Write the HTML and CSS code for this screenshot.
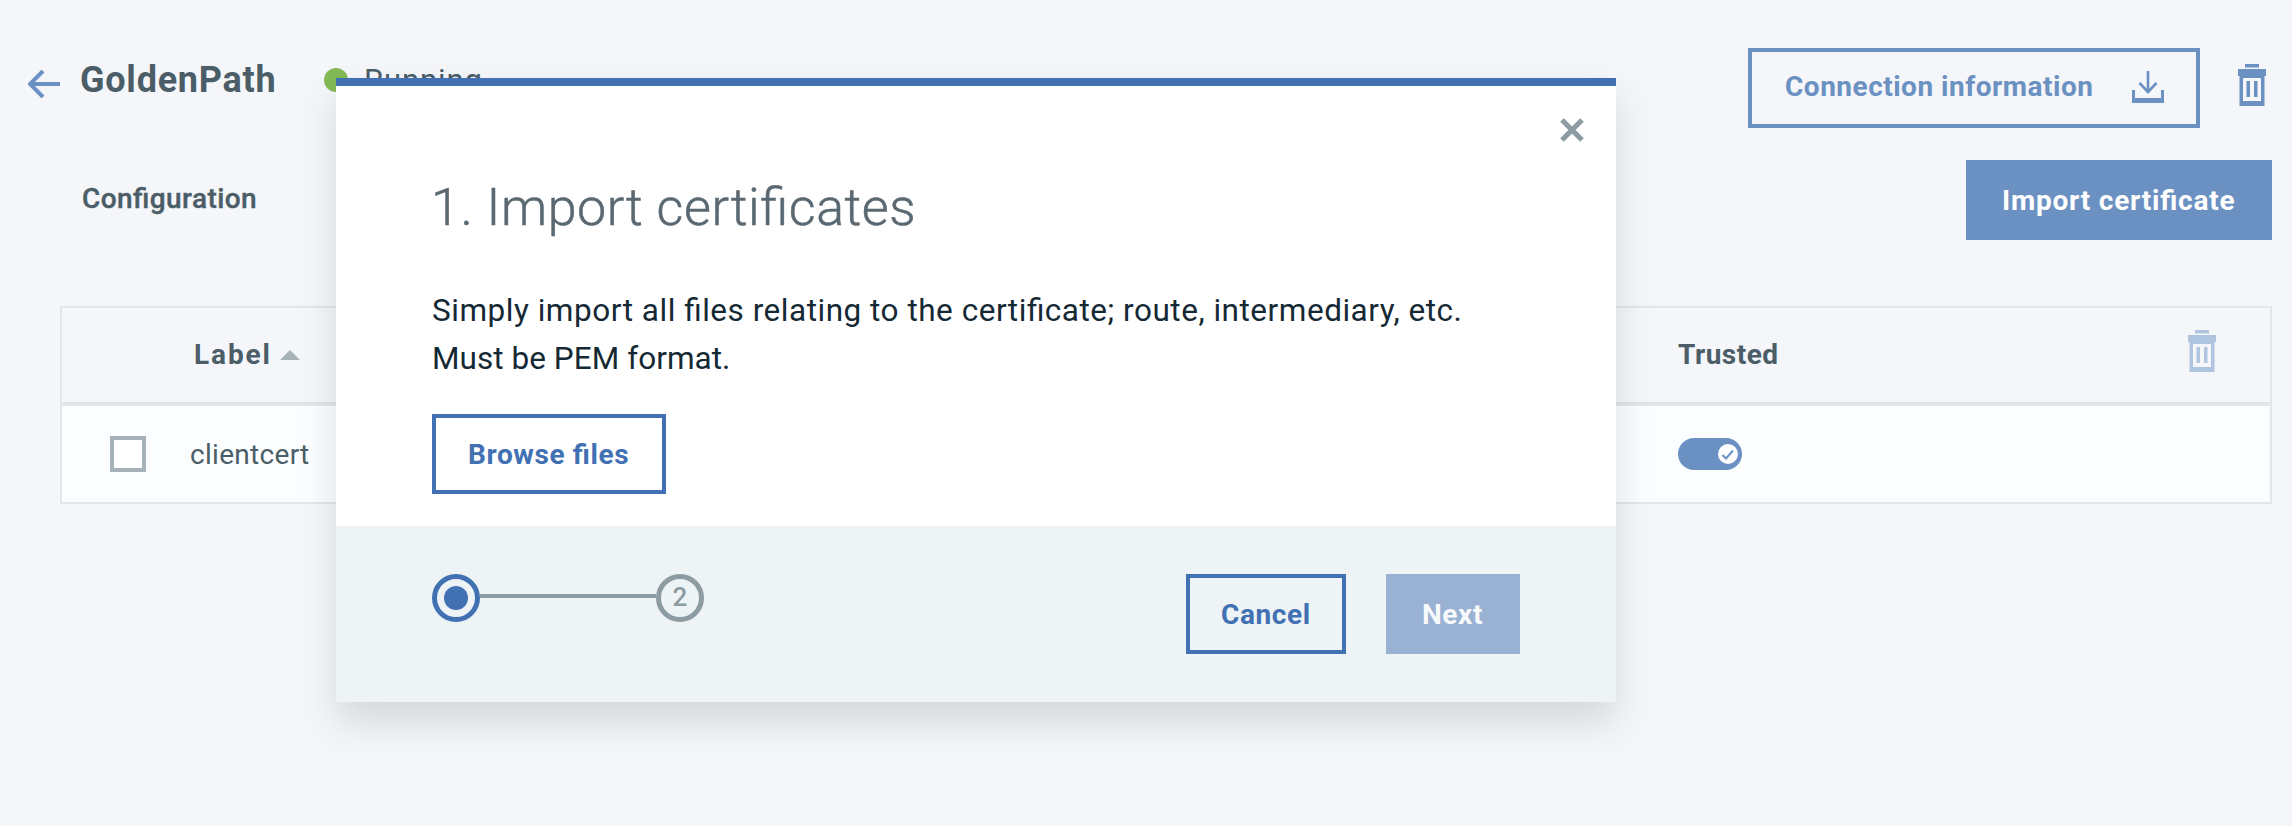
FILE: index.html
```html
<!DOCTYPE html>
<html lang="en">
<head>
<meta charset="utf-8">
<title>GoldenPath</title>
<link rel="stylesheet" href="styles.css">
</head>
<body>
<header class="topbar">
  <svg class="back" width="32" height="28" viewBox="0 0 32 28"><path d="M32 14H2M15 1 2 14l13 13" fill="none" stroke="currentColor" stroke-width="4"/></svg>
  <h1 class="name">GoldenPath</h1>
  <i class="dot"></i>
  <span class="status">Running</span>
  <button class="btn outline connection"><span>Connection information</span>
    <svg width="32" height="32" viewBox="0 0 32 32"><path d="M16 0v21M7.500 12l8.500 9 8.500-9" fill="none" stroke="currentColor" stroke-width="2.600"/><path d="M0 19h3v8h26v-8h3v13H0z" fill="currentColor"/></svg>
  </button>
  <svg class="trash" width="28" height="42" viewBox="0 0 28 42"><path fill="currentColor" fill-rule="evenodd" d="M7 0h14v3.500H7zM0 5h28v7h-1.500v30h-25V12H0zM5 14v23h18V14zM8.500 17h3.500v16H8.500zM16 17h3.500v16H16z"/></svg>
</header>
<section class="subbar">
  <h2 class="tab">Configuration</h2>
  <button class="btn solid import">Import certificate</button>
</section>
<section class="table">
  <div class="row head">
    <div class="label"><span class="label-text">Label</span><i class="sort"></i></div>
    <div class="trusted">Trusted</div>
    <svg class="trash faded" width="28" height="42" viewBox="0 0 28 42"><path fill="currentColor" fill-rule="evenodd" d="M7 0h14v3.500H7zM0 5h28v7h-1.500v30h-25V12H0zM5 14v23h18V14zM8.500 17h3.500v16H8.500zM16 17h3.500v16H16z"/></svg>
  </div>
  <div class="row">
    <i class="check"></i>
    <div class="cert">clientcert</div>
    <svg class="toggle" width="64" height="32" viewBox="0 0 64 32"><rect width="64" height="32" rx="16" fill="#6b91c2"/><circle cx="50" cy="16" r="10" fill="#fff"/><path d="M44.500 17l3.500 3.500 7-8" fill="none" stroke="#6b91c2" stroke-width="2"/></svg>
  </div>
</section>
<div class="modal">
  <div class="content">
    <svg class="close" width="24" height="24" viewBox="0 0 24 24"><path d="M2 2l20 20M22 2 2 22" stroke="currentColor" stroke-width="5.200"/></svg>
    <h3 class="title">1. Import certificates</h3>
    <p class="text">Simply import all files relating to the certificate; route, intermediary, etc.<br><span class="format">Must be PEM format.</span></p>
    <button class="btn outline browse">Browse files</button>
  </div>
  <footer class="footer">
    <div class="steps"><i class="step current"></i><i class="line"></i><b class="step"><span>2</span></b></div>
    <button class="btn outline cancel">Cancel</button>
    <button class="btn solid next">Next</button>
  </footer>
</div>
</body>
</html>
```
FILE: styles.css
```css
* { box-sizing: border-box; margin: 0; }
body { width: 2292px; height: 826px; overflow: hidden; position: relative; background: #f4f6fa; color: #4b5d67; font-family: Roboto, "Liberation Sans", sans-serif; font-size: 28px; line-height: 32px; font-feature-settings: "liga" 1; }
svg { display: block; flex: none; }

/* Page header */
.topbar { display: flex; height: 128px; padding: 48px 26px 0 28px; color: #6b91c2; }
.back { margin: 22px 20px 0 0; }
.name { width: 244px; padding-top: 12px; color: #4b5d67; font-size: 36px; line-height: 40px; font-weight: 700; letter-spacing: .75px; white-space: nowrap; }
.dot { width: 24px; height: 24px; margin-top: 20px; border-radius: 50%; background: #83b956; flex: none; }
.status { padding: 17px 0 0 16px; color: #4b5d67; font-size: 31px; letter-spacing: .9px; }

/* Buttons */
.btn { display: flex; align-items: center; height: 80px; padding: 0; border: 4px solid #6b91c2; background: none; color: #6b91c2; font: 700 28px/32px Roboto, "Liberation Sans", sans-serif; font-feature-settings: "liga" 1; letter-spacing: .6px; white-space: nowrap; flex: none; }
.solid { background: #6b91c2; color: #fff; }
.connection { width: 452px; margin-left: auto; padding: 0 32px 3px 33px; justify-content: space-between; letter-spacing: .5px; }
.connection svg { margin-top: 1px; }
.topbar .trash { margin: 16px 0 0 38px; }
.subbar { display: flex; justify-content: space-between; padding: 32px 20px 0 82px; }
.tab { padding-top: 23px; font-size: 28px; line-height: 32px; font-weight: 500; letter-spacing: .42px; -webkit-text-stroke: .4px; }
.import { width: 306px; padding: 1px 0 0 32px; letter-spacing: .78px; }

/* Certificate table */
.table { width: 2212px; height: 198px; margin: 66px 0 0 60px; border: 2px solid #e2e6ea; background: #fbfdfe; }
.row { display: flex; padding-top: 32px; }
.head { height: 98px; padding: 0; border-bottom: 4px solid #e2e6ea; background: #f4f6fa; }
.label { display: flex; width: 1616px; padding: 31px 0 0 132px; font-weight: 700; }
.label-text { width: 86px; letter-spacing: 1.9px; }
.sort { margin-top: 11px; width: 0; height: 0; border: 10px solid transparent; border-top: 0; border-bottom-color: #a5b2b8; }
.trusted { padding-top: 31px; font-weight: 700; letter-spacing: .5px; }
.faded { margin: 22px 54px 0 auto; color: #afc4df; }
.check { width: 36px; height: 36px; margin: -2px 44px 0 48px; border: 4px solid #a5b2b8; background: #fff; }
.cert { width: 1488px; padding-top: 1px; letter-spacing: .3px; }

/* Import dialog */
.modal { position: absolute; left: 336px; top: 78px; width: 1280px; height: 624px; border-top: 8px solid #4171b3; background: #fff; box-shadow: 0 20px 36px rgba(0,0,0,.125); display: flex; flex-direction: column; }
.content { flex: 1; padding: 32px 32px 0 95px; }
.close { margin-left: auto; color: #8d9ba3; }
.title { margin-top: 34px; color: #5a6872; font-size: 52px; line-height: 64px; font-weight: 300; letter-spacing: .55px; -webkit-text-stroke: .5px; }
.text { margin: 47px 0 31px 1px; color: #152935; font-size: 31.500px; line-height: 48px; letter-spacing: .52px; }
.format { letter-spacing: .05px; }
.modal .outline { color: #4171b3; border-color: #4171b3; }
.browse { width: 234px; margin-left: 1px; padding: 1px 0 0 32px; }
.footer { display: flex; height: 176px; padding: 48px 96px 0; background: #eef3f6; }
.steps { display: flex; margin-right: auto; }
.step { display: grid; place-items: center; width: 48px; height: 48px; border: 5px solid #8d9ba3; border-radius: 50%; color: #8d9ba3; font-size: 26px; font-weight: 500; }
.step span { padding-bottom: 2px; }
.current { border-color: #4171b3; }
.current::after { content: ""; width: 24px; height: 24px; border-radius: 50%; background: #4171b3; }
.line { width: 176px; height: 4px; margin-top: 20px; background: #8d9ba3; }
.cancel { width: 160px; padding: 1px 0 0 31px; margin-right: 40px; }
.modal .next { width: 134px; padding: 1px 0 0 32px; background: #99b1d3; border-color: #99b1d3; color: #f8f9fb; }
```
